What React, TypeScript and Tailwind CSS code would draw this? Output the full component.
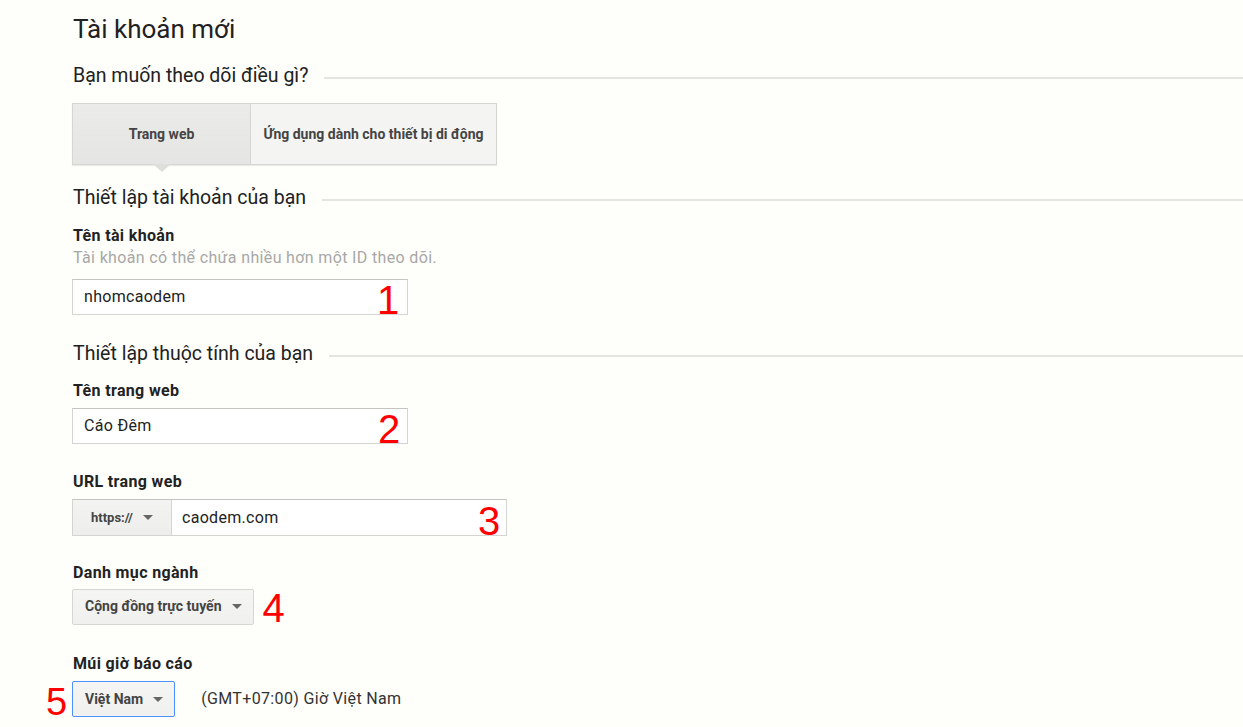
const Caret = () => (
  <svg width="10" height="5" viewBox="0 0 10 5" className="shrink-0">
    <path d="M0 0 L10 0 L5 5 Z" fill="#666" />
  </svg>
);

const SectionHeading = ({ text }: { text: string }) => (
  <div className="flex items-center gap-4">
    <h2 className="text-[19.5px] leading-[28px] text-[#212121] whitespace-nowrap">{text}</h2>
    <div className="flex-1 h-[2px] mt-[3px] bg-[#e4e4e0]" />
  </div>
);

const Label = ({ text, className = "" }: { text: string; className?: string }) => (
  <div className={`text-[16px] leading-[20px] font-bold tracking-[0.35px] text-[#222] ${className}`}>{text}</div>
);

const Marker = ({ n, className }: { n: string; className: string }) => (
  <span
    className={`absolute font-['Liberation_Sans',Arial,sans-serif] text-[#f00] leading-none pointer-events-none ${className}`}
  >
    {n}
  </span>
);

const Dropdown = ({ text, className = "" }: { text: string; className?: string }) => (
  <div
    className={`h-[36px] shrink-0 flex items-center gap-[10px] pl-[12px] pr-[11px] rounded-[2px] border bg-gradient-to-b from-[#f5f5f3] to-[#f0f0ee] text-[14px] font-bold text-[#444] whitespace-nowrap ${className}`}
  >
    <span>{text}</span>
    <Caret />
  </div>
);

export default function App() {
  return (
    <div className="min-h-screen w-full bg-[#fefefb] font-['Roboto','Noto_Sans',sans-serif] text-[#212121]">
      <div className="pl-[72px] pt-[11px]">
        <h1 className="text-[26px] leading-[36px] font-normal pl-[1px]">Tài khoản mới</h1>

        <div className="mt-[15px] pl-[1px]">
          <SectionHeading text="Bạn muốn theo dõi điều gì?" />
        </div>

        {/* loại theo dõi */}
        <div className="mt-[13px] relative w-[425px] h-[62px] flex border border-[#d6d6d2] shadow-[0_1px_1px_rgba(0,0,0,0.08)]">
          <div className="w-[178px] flex items-center justify-center bg-gradient-to-b from-[#ebebe9] to-[#e5e5e3] border-r border-[#d6d6d2] text-[14px] font-bold text-[#444]">
            Trang web
          </div>
          <div className="flex-1 flex items-center justify-center bg-[#f4f4f2] text-[14px] font-bold text-[#444]">
            Ứng dụng dành cho thiết bị di động
          </div>
          <svg
            width="18"
            height="9"
            viewBox="0 0 18 9"
            className="absolute left-[80px] top-[60px]"
          >
            <path d="M0 0 L9 8 L18 0 Z" fill="#dededb" />
          </svg>
        </div>

        <div className="mt-[19px] pl-[1px]">
          <SectionHeading text="Thiết lập tài khoản của bạn" />
        </div>

        <Label text="Tên tài khoản" className="mt-[14px] pl-[1px]" />
        <div className="mt-[2px] pl-[1px] text-[16px] leading-[20px] tracking-[0.35px] text-[#a8a8a6]">
          Tài khoản có thể chứa nhiều hơn một ID theo dõi.
        </div>
        <div className="mt-[11px] relative w-[336px] h-[36px] flex items-center px-[11px] border border-[#d4d4d0] border-t-[#c4c4c0] bg-white text-[16px] tracking-[0.3px] text-[#222]">
          nhomcaodem
          <Marker n="1" className="text-[40px] left-[304px] top-[0px]" />
        </div>

        <div className="mt-[25px] pl-[1px]">
          <SectionHeading text="Thiết lập thuộc tính của bạn" />
        </div>

        <Label text="Tên trang web" className="mt-[13px] pl-[1px]" />
        <div className="mt-[7px] relative w-[336px] h-[36px] flex items-center px-[11px] border border-[#d4d4d0] border-t-[#c4c4c0] bg-white text-[16px] tracking-[0.3px] text-[#222]">
          Cáo Đêm
          <Marker n="2" className="text-[40px] left-[305px] top-[0px]" />
        </div>

        <Label text="URL trang web" className="mt-[28px] pl-[1px]" />
        <div className="mt-[7px] relative w-[435px] h-[37px] flex border border-[#d4d4d0] border-t-[#c4c4c0]">
          <div className="w-[99px] flex items-center gap-[10px] pl-[18px] bg-gradient-to-b from-[#f3f3f1] to-[#eeeeec] border-r border-[#d4d4d0] text-[13px] font-bold text-[#444]">
            <span>https://</span>
            <Caret />
          </div>
          <div className="flex-1 flex items-center pl-[10px] bg-white text-[16px] tracking-[0.3px] text-[#222]">caodem.com</div>
          <Marker n="3" className="text-[40px] left-[405px] top-[1px]" />
        </div>

        <Label text="Danh mục ngành" className="mt-[27px] pl-[1px]" />
        <div className="mt-[5px] h-[37px] relative flex items-center">
          <Dropdown text="Cộng đồng trực tuyến" className="border-[#d6d6d2]" />
          <span className="ml-[9px] font-['Liberation_Sans',Arial,sans-serif] text-[40px] leading-none text-[#f00] mt-[2px]">4</span>
        </div>

        <Label text="Múi giờ báo cáo" className="mt-[29px] pl-[1px]" />
        <div className="mt-[7px] relative flex items-center">
          <Marker n="5" className="text-[38px] left-[-26px] top-[2px]" />
          <Dropdown text="Việt Nam" className="border-[#4d90fe]" />
          <span className="ml-[26px] text-[16px] tracking-[0.35px] text-[#333]">(GMT+07:00) Giờ Việt Nam</span>
        </div>
      </div>
    </div>
  );
}
